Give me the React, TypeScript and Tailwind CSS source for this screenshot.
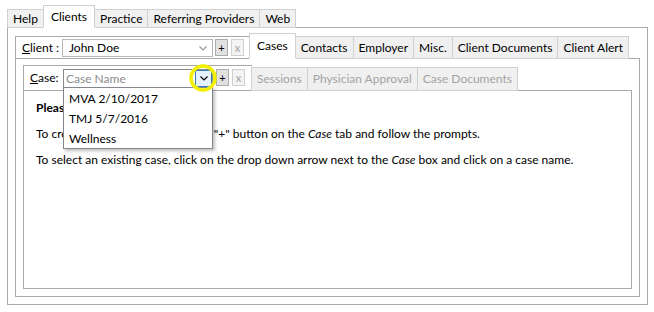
import clsx from "clsx";

const font = { fontFamily: '"Segoe UI", Lato, "Noto Sans", sans-serif' };

type TabProps = { label: string; active?: boolean; disabled?: boolean; size?: "outer" | "inner" | "case" };

const Tab = ({ label, active, disabled, size = "inner" }: TabProps) => (
  <div
    className={clsx(
      "flex items-center justify-center border border-[#d0d0d0] -ml-px whitespace-nowrap text-[12px] leading-none",
      active ? "bg-white border-b-white relative z-10 px-[7px]" : "bg-[#f0f0f0] px-[5px]",
      disabled ? "text-[#a3a3a3]" : "text-black",
      size === "outer" && (active ? "h-[23px]" : "h-[19px]"),
      size === "inner" && (active ? "h-[26px]" : "h-[23px]"),
      size === "case" && "h-[24px]"
    )}
  >
    {label}
  </div>
);

const Chevron = ({ className }: { className?: string }) => (
  <svg width="8" height="5" viewBox="0 0 8 5" className={className}>
    <path d="M0.5 0.5 L4 4 L7.5 0.5" fill="none" stroke="currentColor" strokeWidth="1.2" />
  </svg>
);

const SmallButton = ({ label, enabled }: { label: string; enabled?: boolean }) => (
  <div
    className={clsx(
      "w-[13px] h-[17px] flex items-center justify-center border text-[11px] leading-none",
      enabled ? "bg-[#e1e1e1] border-[#adadad] text-black" : "bg-[#f4f4f4] border-[#cfcfcf] text-[#a0a0a0]"
    )}
  >
    {label}
  </div>
);

export default function App() {
  return (
    <div className="w-[654px] h-[312px] bg-white pt-[5px] pl-[7px] pr-[6px] text-black relative" style={font}>
      {/* outer tabs */}
      <div className="flex items-end pl-px">
        <Tab label="Help" size="outer" />
        <Tab label="Clients" size="outer" active />
        <Tab label="Practice" size="outer" />
        <Tab label="Referring Providers" size="outer" />
        <Tab label="Web" size="outer" />
      </div>
      <div className="-mt-px border border-[#a9a9a9] pt-[5px] px-[7px] pb-[7px]">
        {/* client tab control */}
        <div className="flex items-end">
          <div className="h-[23px] w-[235px] border-l border-t border-[#a9a9a9] flex items-start pt-[2px] pl-[6px]">
            <span className="text-[12px] leading-[17px] w-[40px]">
              <span className="underline">C</span>lient :
            </span>
            <div className="w-[151px] h-[18px] border border-[#b9b9b9] bg-white flex items-center pl-[6px] pr-[5px] text-[12px]">
              <span className="flex-1">John Doe</span>
              <Chevron className="text-[#9a9a9a]" />
            </div>
            <div className="ml-[2px]">
              <SmallButton label="+" enabled />
            </div>
            <div className="ml-[3px]">
              <SmallButton label="x" />
            </div>
          </div>
          <Tab label="Cases" active />
          <Tab label="Contacts" />
          <Tab label="Employer" />
          <Tab label="Misc." />
          <Tab label="Client Documents" />
          <Tab label="Client Alert" />
        </div>
        <div className="-mt-px border border-[#a9a9a9] pt-[6px] px-[7px] pb-[7px]">
          {/* case tab control */}
          <div className="flex items-end">
            <div className="h-[26px] w-[229px] border-l border-t border-[#a9a9a9] flex items-start pt-[3px] pl-[6px] relative">
              <span className="text-[12px] leading-[18px] w-[33px]">
                <span className="underline">C</span>ase:
              </span>
              <div className="w-[150px] h-[19px] border border-[#8a8a8a] bg-white flex items-center pl-[2px] text-[12px]">
                <span className="flex-1 text-[#8d8d8d]">Case Name</span>
                <div className="w-[17px] h-[17px] bg-[#e5f1fb] border border-[#3c7fb1] flex items-center justify-center">
                  <Chevron className="text-black" />
                </div>
              </div>
              <div className="ml-[3px]">
                <SmallButton label="+" enabled />
              </div>
              <div className="ml-[3px]">
                <SmallButton label="x" />
              </div>
            </div>
            <Tab label="Sessions" size="case" disabled />
            <Tab label="Physician Approval" size="case" disabled />
            <Tab label="Case Documents" size="case" disabled />
          </div>
          <div className="-mt-px border border-[#a9a9a9] h-[199px] pl-[12px] pt-[8px] text-[12px]">
            <p className="font-bold leading-[18px]">Please select a case.</p>
            <p className="mt-[8px] leading-[18px]">
              To create a new case, click on the "+" button on the <i>Case</i> tab and follow the prompts.
            </p>
            <p className="mt-[8px] leading-[18px]">
              To select an existing case, click on the drop down arrow next to the <i>Case</i> box and click on a case name.
            </p>
          </div>
        </div>
      </div>

      {/* dropdown list */}
      <div className="absolute left-[63px] top-[87px] w-[150px] h-[62px] bg-white border border-[#828790] shadow-[2px_2px_3px_rgba(0,0,0,0.25)] pt-[1px] text-[12px]">
        <div className="h-[20px] flex items-center pl-[5px]">MVA 2/10/2017</div>
        <div className="h-[20px] flex items-center pl-[5px]">TMJ 5/7/2016</div>
        <div className="h-[20px] flex items-center pl-[5px]">Wellness</div>
      </div>

      {/* highlight circle */}
      <svg className="absolute left-[188px] top-[63px]" width="30" height="30" viewBox="0 0 30 30">
        <circle cx="15" cy="15" r="12" fill="none" stroke="#f2ef00" strokeWidth="3.5" />
      </svg>
    </div>
  );
}
